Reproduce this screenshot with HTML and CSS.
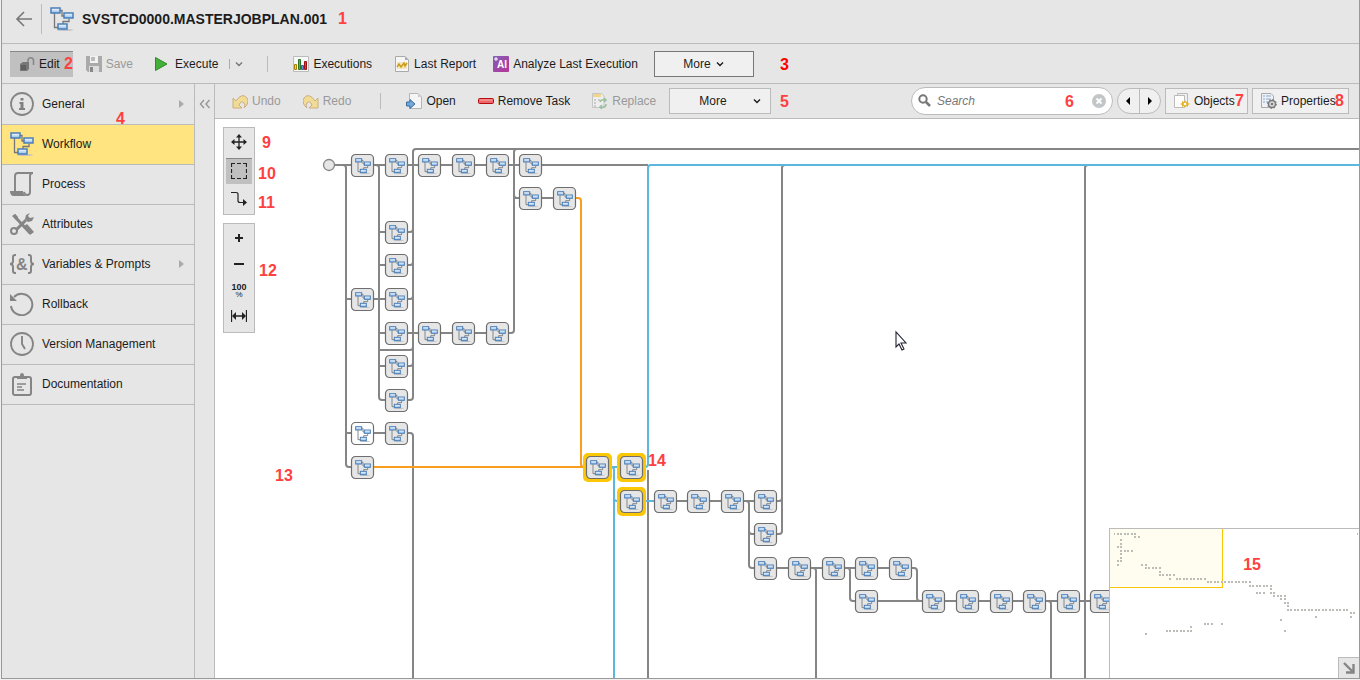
FILE: index.html
```html
<!DOCTYPE html>
<html lang="en">
<head>
    <meta charset="UTF-8">
    <meta name="viewport" content="width=device-width, initial-scale=1.0">
    <title>SVSTCD0000.MASTERJOBPLAN.001</title>
    <link rel="stylesheet" href="styles.css">
</head>
<body>
    <!-- Shared symbols -->
    <svg class="symbols" aria-hidden="true">
        <linearGradient id="boxFill" x1="0" y1="0" x2="0" y2="1">
            <stop offset="0" stop-color="#ffffff"/>
            <stop offset="1" stop-color="#8db9e8"/>
        </linearGradient>
        <symbol id="flow" viewBox="0 0 24 24">
            <ellipse cx="15" cy="23" rx="8" ry="1" fill="#c4c4c4"/>
            <path d="M4.500 6v14.500H8M10 3.500h2V9h3M19 12v2.500h-6V17" fill="none" stroke="#777" stroke-width="1.300"/>
            <g fill="url(#boxFill)" stroke="#4a7fb8" stroke-width="1.500">
                <rect x="1" y="1" width="9" height="5"/>
                <rect x="14" y="6" width="9" height="5"/>
                <rect x="8" y="17" width="9" height="5"/>
            </g>
        </symbol>
        <g id="task">
            <rect x="0.500" y="0.500" width="22" height="22" rx="4" fill="#e6e6e6" stroke="#6e6e6e" stroke-width="1.200"/>
            <use href="#flow" x="4" y="4" width="16" height="16"/>
        </g>
        <symbol id="chevron" viewBox="0 0 10 10">
            <path d="M2 3.500l3 3 3-3" fill="none" stroke="currentColor" stroke-width="1.400"/>
        </symbol>
    </svg>

    <div class="app">
        <header class="header">
            <button class="back" aria-label="Back">
                <svg width="18" height="16" viewBox="0 0 18 16"><path d="M17 8H2M9 1L2 8l7 7" fill="none" stroke="#777" stroke-width="1.600"/></svg>
            </button>
            <svg width="24" height="24"><use href="#flow"/></svg>
            <h1>SVSTCD0000.MASTERJOBPLAN.001</h1>
        </header>

        <div class="toolbar">
            <button class="tool edit">
                <svg width="16" height="16" viewBox="0 0 16 16">
                    <path d="M9 7V4a2.800 2.800 0 0 1 5.500 0v5" fill="none" stroke="#888" stroke-width="1.600"/>
                    <path d="M1 8l3-2h6v7l-2 2H1z" fill="#777"/><path d="M2 9h5v5H2z" fill="#606060"/>
                </svg>
                Edit
            </button>
            <button class="tool save" disabled>
                <svg width="16" height="16" viewBox="0 0 16 16">
                    <path d="M0 0h16v16H2l-2-2z" fill="#aaa"/><path d="M4 0h8v7H4z" fill="#f3f3f3"/><path d="M5 1h4v4H5z" fill="#bbb"/>
                    <path d="M3 10h10v6H3z" fill="#ddd"/><path d="M4 11h3v5H4z" fill="#888"/>
                </svg>
                Save
            </button>
            <button class="tool execute">
                <svg width="16" height="16" viewBox="0 0 16 16"><path d="M.5 1.500L12 8 .5 14.500z" fill="#45b039" stroke="#2f8a28"/></svg>
                Execute
            </button>
            <button class="split" aria-label="Execute options"><svg width="12" height="10"><use href="#chevron"/></svg></button>
            <span class="separator"></span>
            <button class="tool">
                <svg width="16" height="16" viewBox="0 0 16 16">
                    <path d="M.5.500h15v15H.5z" fill="#f8f8f8" stroke="#bbb"/>
                    <path d="M1.500 8.500h2v5h-2z" fill="#f3d34a" stroke="#a58300"/><path d="M5.500 3.500h2v10h-2z" fill="#56b04c" stroke="#28752a"/>
                    <path d="M8.500 9.500h2v4h-2z" fill="#6b97d8" stroke="#315d9e"/><path d="M11.500 5.500h2v8h-2z" fill="#e1383e" stroke="#9d1014"/>
                </svg>
                Executions
            </button>
            <button class="tool report">
                <svg width="15" height="16" viewBox="0 0 15 16">
                    <path d="M.5.500H10L13.500 4v11.500H.5z" fill="#f6f6f6" stroke="#aaa"/><path d="M10 .500V4h3.500z" fill="#aaa"/>
                    <path d="M2 6h10v7H2z" fill="#f3e6bd"/><path d="M2 11l2-3 2 3 3-4 1 3 2-3" fill="none" stroke="#cc9a16" stroke-width="1.500"/>
                </svg>
                Last Report
            </button>
            <button class="tool near">
                <svg width="16" height="16" viewBox="0 0 16 16">
                    <defs><linearGradient id="ai" x1="0" y1="0" x2="1" y2="1"><stop offset="0" stop-color="#8060b8"/><stop offset="1" stop-color="#b83498"/></linearGradient></defs>
                    <rect width="16" height="16" rx="1" fill="url(#ai)"/>
                    <text class="ai-text" x="4" y="12">AI</text><path d="M3 1v4M1 3h4" stroke="#fff"/>
                </svg>
                Analyze Last Execution
            </button>
            <button class="more more-main">More <svg width="10" height="10"><use href="#chevron"/></svg></button>
        </div>

        <div class="main">
            <nav class="sidebar">
                <a href="#general" class="nav-item">
                    <svg width="24" height="24" viewBox="0 0 24 24"><circle cx="12" cy="12" r="11" fill="none" stroke="#858585" stroke-width="1.800"/><path d="M10.500 6h3v2.500h-3zM9.500 10h4v6h1.500v2H9v-2h1.500v-4h-1z" fill="#808080"/></svg>
                    General <span class="arrow"></span>
                </a>
                <a href="#workflow" class="nav-item active">
                    <svg width="24" height="24"><use href="#flow"/></svg>
                    Workflow
                </a>
                <a href="#process" class="nav-item">
                    <svg width="24" height="24" viewBox="0 0 24 24"><path d="M5 20V4q0-3 3-3h15q-3 0-3 3v16q0 3-3 3-2 0-3-3" fill="none" stroke="#858585" stroke-width="1.900"/><path d="M0 19h13q0 3 3 5H4q-4 0-4-5z" fill="#858585"/></svg>
                    Process
                </a>
                <a href="#attributes" class="nav-item">
                    <svg width="24" height="24" viewBox="0 0 24 24"><path d="M4 3l3 4 13 14" stroke="#858585" stroke-width="3"/><path d="M14 14l3-2 7 8-4 3z" fill="#858585"/><path d="M2 4l3-2 3 3v3H6z" fill="#858585"/><path d="M16 8L6 18" stroke="#858585" stroke-width="3"/><circle cx="4" cy="19" r="3" fill="none" stroke="#858585" stroke-width="2"/><path d="M20 1l-4 2-1 4 3 3 4-1 2-4-4 1-2-2z" fill="#858585"/></svg>
                    Attributes
                </a>
                <a href="#variables" class="nav-item">
                    <svg width="24" height="24" viewBox="0 0 24 24"><path d="M6 3H5Q3 3 3 5v4q0 3-3 3 3 0 3 3v4q0 2 2 2h1M18 3h1q2 0 2 2v4q0 3 3 3-3 0-3 3v4q0 2-2 2h-1" fill="none" stroke="#858585" stroke-width="2"/><text class="amp" x="6" y="18">&amp;</text></svg>
                    Variables &amp; Prompts <span class="arrow"></span>
                </a>
                <a href="#rollback" class="nav-item">
                    <svg width="24" height="24" viewBox="0 0 24 24"><path d="M4 5a10.700 10.700 0 1 1-3 9" fill="none" stroke="#858585" stroke-width="2"/><path d="M0 2v7h7z" fill="#858585"/></svg>
                    Rollback
                </a>
                <a href="#versions" class="nav-item">
                    <svg width="24" height="24" viewBox="0 0 24 24"><circle cx="12" cy="12" r="11" fill="none" stroke="#858585" stroke-width="1.800"/><path d="M12 4v8l3 5" fill="none" stroke="#858585" stroke-width="1.900"/></svg>
                    Version Management
                </a>
                <a href="#documentation" class="nav-item">
                    <svg width="24" height="24" viewBox="0 0 24 24"><rect x="3" y="5" width="18" height="18" rx="2" fill="none" stroke="#858585" stroke-width="2"/><path d="M7 7V4h3q0-3 2-3t2 3h3v3z" fill="#858585"/><path d="M7 12h9M7 15h5M7 18h7" stroke="#858585" stroke-width="1.500"/></svg>
                    Documentation
                </a>
            </nav>

            <button class="collapse" aria-label="Collapse sidebar">
                <svg width="12" height="10" viewBox="0 0 12 10"><path d="M5 1L1.500 5 5 9M10.500 1L7 5l3.500 4" fill="none" stroke="#999" stroke-width="1.500"/></svg>
            </button>

            <section class="workspace">
                <div class="workflow-bar">
                    <button class="tool" disabled>
                        <svg width="16" height="16" viewBox="0 0 16 16"><path d="M1 5v10h9l-3-3q2-5 5-2 2 2 0 5 6-5 3-10-5-6-11 3z" fill="#f2dc95" stroke="#c9ae80"/></svg>
                        Undo
                    </button>
                    <button class="tool spaced" disabled>
                        <svg width="16" height="16" viewBox="0 0 16 16"><path d="M15 5v10H6l3-3Q7 7 4 10q-2 2 0 5-6-5-3-10 5-6 11 3z" fill="#f2dc95" stroke="#c9ae80"/></svg>
                        Redo
                    </button>
                    <span class="separator wide"></span>
                    <button class="tool">
                        <svg width="16" height="16" viewBox="0 0 16 16"><path d="M3.500.500H12L15.500 4v11.500h-12z" fill="#f5f5f5" stroke="#b5b5b5"/><path d="M12 .500V4h3.500z" fill="#ccc"/><path d="M.5 9H4V6.500l5 4.500-5 4.500V13H.5z" fill="#77a9d6" stroke="#376ca0"/></svg>
                        Open
                    </button>
                    <button class="tool spaced">
                        <svg width="16" height="16" viewBox="0 0 16 16"><rect x=".5" y="5.500" width="15" height="5" rx="1" fill="#e66" stroke="#b30d14"/><path d="M2 7h12" stroke="#f8abab"/></svg>
                        Remove Task
                    </button>
                    <button class="tool spaced" disabled>
                        <svg width="16" height="16" viewBox="0 0 16 16"><path d="M.5.500h9L12 3v11.500H.5z" fill="#eee" stroke="#c5c5c5"/><path d="M1 1h8v3H1z" fill="#f0d58b"/><path d="M2 7h2M2 10h2M2 13h2M6 7h2" stroke="#aaa"/><path d="M8 9q1-3 5-2M12 5l2 2-2 2M14 11q0 4-5 3M10 12l-2 2 2 2" fill="none" stroke="#9cbf9f" stroke-width="1.600"/></svg>
                        Replace
                    </button>
                    <button class="more more-flow">More <svg width="10" height="10"><use href="#chevron"/></svg></button>

                    <label class="search">
                        <svg width="14" height="14" viewBox="0 0 14 14"><circle cx="5" cy="5" r="3.700" fill="none" stroke="#777" stroke-width="2"/><path d="M8 8l4 4" stroke="#777" stroke-width="2.500"/></svg>
                        <input type="text" placeholder="Search" aria-label="Search">
                        <svg width="14" height="14" viewBox="0 0 14 14"><circle cx="7" cy="7" r="7" fill="#c3c6c8"/><path d="M4.500 4.500l5 5M9.500 4.500l-5 5" stroke="#fff" stroke-width="1.800"/></svg>
                    </label>
                    <div class="stepper">
                        <button aria-label="Previous match"><svg width="6" height="8" viewBox="0 0 6 8"><path d="M5 0v8L1 4z"/></svg></button>
                        <button aria-label="Next match"><svg width="6" height="8" viewBox="0 0 6 8"><path d="M1 0v8l4-4z"/></svg></button>
                    </div>
                    <button class="panel-btn objects">
                        <svg width="16" height="16" viewBox="0 0 16 16"><path d="M3.500.500h10v11h-10z" fill="#eee" stroke="#bbb"/><path d="M.5 2.500h10v12H.5z" fill="#fff" stroke="#bbb"/><path d="M11 7l1 2 2-1 0 2 2 1-2 1 0 2-2-1-1 2-1-2-2 1 0-2-2-1 2-1 0-2 2 1z" fill="#e3b32d"/><circle cx="11" cy="11" r="1.300" fill="#fff"/></svg>
                        Objects
                    </button>
                    <button class="panel-btn properties">
                        <svg width="16" height="16" viewBox="0 0 16 16"><path d="M.5.500H10L12.500 3v11.500H.5z" fill="#eef1f5" stroke="#aaa"/><path d="M2 3h2M2 6h2M2 9h2M5 3h5M5 6h5M5 9h4" stroke="#8ba6c8"/><circle cx="11" cy="11" r="3.500" fill="#ddd" stroke="#777" stroke-width="1.500"/><circle cx="11" cy="11" r="4.500" fill="none" stroke="#777" stroke-dasharray="1.500 2"/><circle cx="11" cy="11" r="1.300" fill="#777"/></svg>
                        Properties
                    </button>
                </div>

                <div class="canvas">
                    <svg class="diagram" role="img" aria-label="Job plan workflow">
                        <!-- node and edge positions are window coordinates -->
                        <g transform="translate(-215 -119)">
                            <g class="edges">
                                <path d="M334 165H648M334 165h9q3 0 3 3V464q0 3 3 3h5M346 299h50M346 433h50"/>
                                <path d="M374 165h2q3 0 3 3V397q0 3 3 3h28q3 0 3-3V152q0-3 3-3H2000"/>
                                <path d="M379 232h31q3 0 3-3M379 265h31q3 0 3-3M379 299h31q3 0 3-3M379 333h132q3 0 3-3V152q0-3 3-3M379 350h31q3 0 3-3M379 366h31q3 0 3-3"/>
                                <path d="M396 433h14q3 0 3 3V2000M514 198h61M514 165v30q0 3 3 3"/>
                                <path d="M648 470V2000M654 501H779q3 0 3-3V168q0-3 3-3M743 501h3q3 0 3 3v61q0 3 3 3h162q3 0 3 3v27q0 3 3 3M749 531q0 3 3 3h27q3 0 3-3v-33"/>
                                <path d="M811 568h2q3 0 3 3V2000M844 568h3q3 0 3 3v27q0 3 3 3H2000M1045 601h3q3 0 3 3V2000M1085 2000V168q0-3 3-3"/>
                            </g>
                            <path class="edge-orange" d="M374 467h212M575 198h3q3 0 3 3v263q0 3 3 3"/>
                            <path class="edge-blue" d="M597 467h48q3 0 3-3V168q0-3 3-3H2000M611 467q3 0 3 3V2000M614 498q0 3 3 3h38"/>
                            <circle cx="329" cy="165" r="5.500" fill="#e6e6e6" stroke="#858585" stroke-width="1.300"/>

                            <g class="halos">
                                <rect x="583" y="453" width="29" height="29" rx="5"/>
                                <rect x="617" y="453" width="29" height="29" rx="5"/>
                                <rect x="617" y="487" width="29" height="29" rx="5"/>
                            </g>
                            <g>
                                <use href="#task" x="351" y="154"/><use href="#task" x="385" y="154"/><use href="#task" x="418" y="154"/>
                                <use href="#task" x="452" y="154"/><use href="#task" x="486" y="154"/><use href="#task" x="519" y="154"/>
                                <use href="#task" x="519" y="187"/><use href="#task" x="553" y="187"/>
                                <use href="#task" x="385" y="221"/>
                                <use href="#task" x="385" y="254"/>
                                <use href="#task" x="351" y="288"/><use href="#task" x="385" y="288"/>
                                <use href="#task" x="385" y="322"/><use href="#task" x="418" y="322"/><use href="#task" x="452" y="322"/><use href="#task" x="486" y="322"/>
                                <use href="#task" x="385" y="355"/>
                                <use href="#task" x="385" y="389"/>
                                <use href="#task" x="385" y="422"/>
                                <use href="#task" x="351" y="456"/><use href="#task" x="586" y="456"/><use href="#task" x="620" y="456"/>
                                <use href="#task" x="620" y="490"/><use href="#task" x="654" y="490"/><use href="#task" x="687" y="490"/><use href="#task" x="721" y="490"/><use href="#task" x="754" y="490"/>
                                <use href="#task" x="754" y="523"/>
                                <use href="#task" x="754" y="557"/><use href="#task" x="788" y="557"/><use href="#task" x="822" y="557"/><use href="#task" x="855" y="557"/><use href="#task" x="889" y="557"/>
                                <use href="#task" x="855" y="590"/><use href="#task" x="922" y="590"/><use href="#task" x="956" y="590"/><use href="#task" x="990" y="590"/>
                                <use href="#task" x="1023" y="590"/><use href="#task" x="1057" y="590"/><use href="#task" x="1090" y="590"/>
                            </g>
                            <rect x="351.500" y="422.500" width="22" height="22" rx="4" fill="#fff" stroke="#6e6e6e" stroke-width="1.200"/>
                            <use href="#flow" x="355" y="426" width="16" height="16"/>

                            <path d="M896 332v15l3-3 3 6 2-1-3-6h5z" fill="#fff" stroke="#223" stroke-width="1.100"/>
                        </g>
                    </svg>

                    <div class="palettes">
                        <div class="palette modes">
                            <button aria-label="Pan"><svg width="16" height="16" viewBox="0 0 16 16"><path d="M8 2v12M2 8h12" stroke="#222" stroke-width="1.300"/><path d="M8 0l3 3.500H5zM8 16l3-3.500H5zM0 8l3.500-3v6zM16 8l-3.500-3v6z" fill="#222"/></svg></button>
                            <button class="on" aria-label="Select"><svg width="16" height="16" viewBox="0 0 16 16"><path d="M.5 4V.500H4M6 .500h4M12 .500h3.500V4M15.500 6v4M15.500 12v3.500H12M10 15.500H6M4 15.500H.5V12M.5 10V6" fill="none" stroke="#222" stroke-width="1.200"/></svg></button>
                            <button aria-label="Connect"><svg width="16" height="16" viewBox="0 0 16 16"><path d="M0 2.500h5q2 0 2 2v6q0 2 2 2h4" fill="none" stroke="#222" stroke-width="1.200"/><path d="M12 9l4 3.500-4 3.500z" fill="#222"/></svg></button>
                        </div>
                        <div class="palette">
                            <button aria-label="Zoom in"><svg width="16" height="16" viewBox="0 0 16 16"><path d="M8 4v8M4 8h8" stroke="#222" stroke-width="2"/></svg></button>
                            <button aria-label="Zoom out"><svg width="16" height="16" viewBox="0 0 16 16"><path d="M3 8h10" stroke="#222" stroke-width="2"/></svg></button>
                            <button class="zoom-reset"><b>100</b><small>%</small></button>
                            <button aria-label="Fit width"><svg width="16" height="16" viewBox="0 0 16 16"><path d="M.5 2v12M15.500 2v12M3 8h10" stroke="#222" stroke-width="1.300"/><path d="M1 8l4-4v8zM15 8l-4-4v8z" fill="#222"/></svg></button>
                        </div>
                    </div>

                    <div class="minimap">
                        <svg width="249" height="149" viewBox="0 0 249 149" role="img" aria-label="Overview">
                            <path d="M0 0h112.500v57.500H0" fill="#fffdf0"/>
                            <path d="M112.500 0v58.500M0 58.500h113" stroke="#f5c60a"/>
                            <path class="dots" d="M7 5h19M24 8h2m2 0h2M10 11h2M10 15h2M7 18h5M10 22h2m2 0h9M10 25h2M10 29h2M7 32h5M7 36h2M31 36h2m2 0h2M35 39h16M49 43h2M49 46h16M59 50h2M66 50h30M97 53h44M139 57h23M160 60h2M146 64h9M160 64h5M163 67h2m2 0h5m2 0h2M170 70h2m2 0h2M174 74h5M177 77h2M177 81h61M240 84h5M240 88h2M205 88h2M170 91h2M174 102h2M94 95h9M111 95h2M80 98h2M56 102h26M35 105h2M4 5h1M247 5h1"/>
                        </svg>
                        <button class="shrink" aria-label="Hide overview"><svg width="12" height="12" viewBox="0 0 12 12"><path d="M1 1l9 9M10.500 2v8.500H3" fill="none" stroke="#858585" stroke-width="2.400"/></svg></button>
                    </div>
                </div>
            </section>
        </div>
    </div>

    <!-- Numbered callouts -->
    <div class="callouts">
        <span class="c1">1</span><span class="c2">2</span><span class="c3">3</span><span class="c4">4</span><span class="c5">5</span>
        <span class="c6">6</span><span class="c7">7</span><span class="c8">8</span><span class="c9">9</span><span class="c10">10</span>
        <span class="c11">11</span><span class="c12">12</span><span class="c13">13</span><span class="c14">14</span><span class="c15">15</span>
    </div>
</body>
</html>
```
FILE: styles.css
```css
* {
    box-sizing: border-box;
}
body {
    margin: 0;
    background: #f0f0f0;
    color: #1c1c1c;
    font: 12px/16px "Liberation Sans", Arial, sans-serif;
}
button {
    margin: 0;
    padding: 0;
    border: 0;
    background: none;
    color: inherit;
    font: inherit;
    cursor: pointer;
}
svg {
    flex: none;
    display: block;
}
.symbols {
    position: absolute;
    width: 0;
    height: 0;
}
.app {
    display: flex;
    flex-direction: column;
    height: calc(100vh - 1px);
    margin-left: 1px;
    border: 1px solid #999;
    border-top: 0;
    background: #e6e6e6;
}

/* header */
.header {
    display: flex;
    align-items: center;
    height: 44px;
    padding-bottom: 5px;
    border-bottom: 1px solid #bbb;
}
.back {
    display: flex;
    align-items: center;
    height: 30px;
    margin-right: 8px;
    padding: 0 8px 0 13px;
    border-right: 1px solid #bbb;
}
.header h1 {
    margin: 0 0 0 8px;
    font-size: 14px;
}

/* main toolbar */
.toolbar {
    display: flex;
    align-items: center;
    height: 40px;
    padding-left: 8px;
    border-bottom: 1px solid #bbb;
    white-space: nowrap;
}
.tool {
    display: flex;
    align-items: center;
    gap: 4px;
    height: 26px;
}
.tool:disabled {
    color: #999;
}
.edit {
    padding: 0 13px 0 9px;
    border-top: 1px solid #888;
    background: #c0c0c0;
}
.save {
    margin-left: 13px;
}
.execute,
.spaced {
    margin-left: 22px;
}
.report {
    margin-left: 23px;
}
.near {
    margin-left: 17px;
}
.split {
    height: 10px;
    margin-left: 11px;
    padding-left: 3px;
    border-left: 1px solid #aaa;
    color: #777;
}
.separator {
    width: 1px;
    height: 16px;
    margin: 0 25px 0 22px;
    background: #bbb;
}
.separator.wide {
    margin-left: 29px;
}
.ai-text {
    font: bold 10px "Liberation Sans", Arial, sans-serif;
    fill: #fff;
}
.more {
    display: flex;
    align-items: center;
    justify-content: center;
    gap: 4px;
    height: 26px;
    border: 1px solid #bbb;
    background: #f0f0f0;
}
.more-main {
    width: 100px;
    margin-left: 16px;
    border-color: #777;
}
.more-flow {
    width: 102px;
    margin-left: 13px;
    padding: 0 8px 0 29px;
    justify-content: space-between;
}

/* sidebar */
.main {
    display: flex;
    flex: 1;
    min-height: 0;
}
.sidebar {
    width: 193px;
    padding-top: 1px;
    border-right: 1px solid #bbb;
}
.nav-item {
    display: flex;
    align-items: center;
    gap: 8px;
    height: 40px;
    padding: 0 10px 2px 8px;
    border-bottom: 1px solid #bbb;
    color: inherit;
    text-decoration: none;
}
.nav-item.active {
    background: #ffe480;
}
.arrow {
    margin-left: auto;
    border: 4px solid transparent;
    border-left: 5px solid #aaa;
    border-right: 0;
}
.amp {
    font: bold 16px "Liberation Sans", Arial, sans-serif;
    fill: #858585;
}
.collapse {
    display: flex;
    align-items: flex-start;
    justify-content: center;
    width: 20px;
    padding-top: 15px;
    border-right: 1px solid #bbb;
}

/* workflow toolbar */
.workspace {
    display: flex;
    flex: 1;
    flex-direction: column;
    min-width: 0;
}
.workflow-bar {
    display: flex;
    align-items: center;
    height: 35px;
    padding: 0 10px 0 17px;
    border-bottom: 1px solid #bbb;
    white-space: nowrap;
}
.search {
    display: flex;
    align-items: center;
    gap: 5px;
    width: 202px;
    height: 28px;
    margin-left: auto;
    padding: 0 6px;
    border: 1px solid #bbb;
    border-radius: 14px;
    background: #fff;
}
.search input {
    flex: 1;
    min-width: 0;
    padding: 0;
    border: 0;
    outline: 0;
    background: none;
    font: inherit;
}
.search input::placeholder {
    color: #777;
    font-style: italic;
}
.stepper {
    display: flex;
    width: 44px;
    height: 26px;
    margin: 0 4px;
    border: 1px solid #bbb;
    border-radius: 13px;
    background: #f0f0f0;
}
.stepper button {
    display: flex;
    flex: 1;
    align-items: center;
    justify-content: center;
}
.stepper button + button {
    border-left: 1px solid #bbb;
}
.panel-btn {
    display: flex;
    align-items: center;
    gap: 4px;
    height: 26px;
    padding-left: 8px;
    border: 1px solid #bbb;
    background: #f0f0f0;
}
.objects {
    width: 83px;
    margin-right: 4px;
}
.properties {
    width: 97px;
}

/* canvas */
.canvas {
    position: relative;
    flex: 1;
    min-height: 0;
    overflow: hidden;
    background: #fff;
}
.diagram {
    width: 100%;
    height: 100%;
}
.edges,
.edge-orange,
.edge-blue {
    fill: none;
    stroke: #858585;
    stroke-width: 2;
}
.edge-orange {
    stroke: #f99d1c;
}
.edge-blue {
    stroke: #5bb8dc;
}
.halos {
    fill: #fbc707;
}
.palettes {
    position: absolute;
    top: 8px;
    left: 8px;
}
.palette {
    display: flex;
    flex-direction: column;
    width: 32px;
    padding: 2px;
    border: 1px solid #bbb;
    background: #e6e6e6;
}
.palette.modes {
    gap: 2px;
    margin-bottom: 8px;
}
.palette button {
    display: flex;
    flex-direction: column;
    align-items: center;
    justify-content: center;
    height: 26px;
    padding-bottom: 2px;
}
.palette .on {
    border-top: 1px solid #888;
    background: #c0c0c0;
}
.zoom-reset {
    font-size: 9px;
    line-height: 8px;
}
.zoom-reset small {
    font-size: 8px;
    line-height: 7px;
}
.minimap {
    position: absolute;
    right: 0;
    bottom: 0;
    border: solid #bbb;
    border-width: 1px 0 0 1px;
    background: #fff;
}
.dots {
    fill: none;
    stroke: #bdbdb8;
    stroke-width: 2;
    stroke-dasharray: 2 1 2 2;
}
.shrink {
    position: absolute;
    right: 0;
    bottom: 0;
    padding: 4px;
    border: solid #bbb;
    border-width: 1px 0 0 1px;
    background: #e6e6e6;
}

/* callouts */
.callouts span {
    position: absolute;
    color: #ff4040;
    font-size: 16px;
    font-weight: bold;
    line-height: 20px;
    pointer-events: none;
}
.c1 { top: 9px; left: 338px; }
.c2 { top: 54px; left: 64px; }
.callouts .c3 { top: 55px; left: 780px; color: #f00; }
.c4 { top: 109px; left: 116px; }
.c5 { top: 92px; left: 780px; }
.c6 { top: 92px; right: 286px; }
.c7 { top: 91px; right: 116px; }
.c8 { top: 91px; right: 16px; }
.c9 { top: 133px; left: 262px; }
.c10 { top: 164px; left: 258px; }
.c11 { top: 193px; left: 258px; }
.c12 { top: 261px; left: 259px; }
.c13 { top: 466px; left: 275px; }
.c14 { top: 451px; left: 648px; }
.c15 { top: 555px; right: 99px; }
```
